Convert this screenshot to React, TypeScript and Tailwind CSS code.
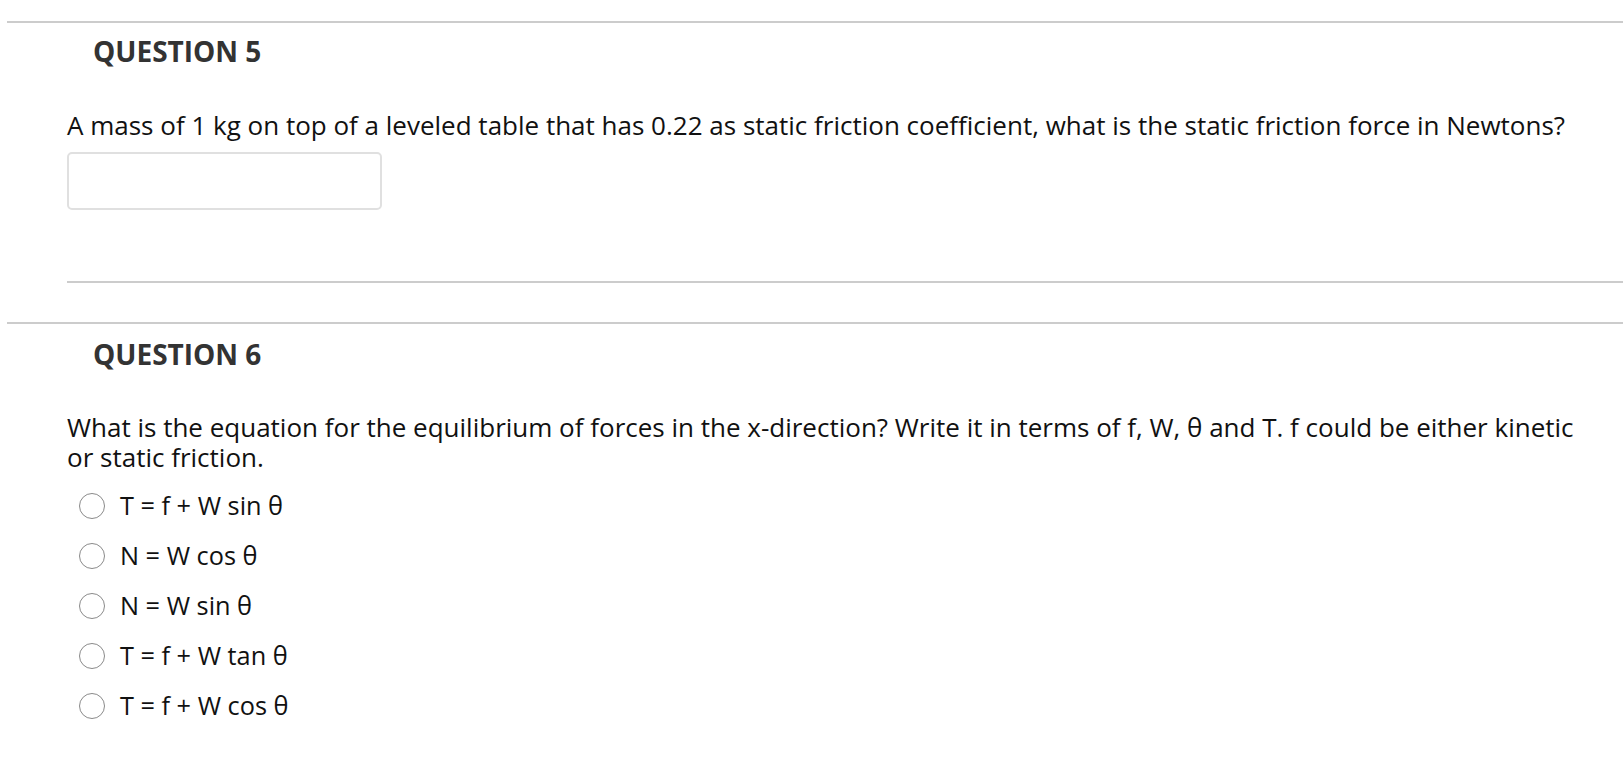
import React from "react";

const options = [
  "T = f + W sin θ",
  "N = W cos θ",
  "N = W sin θ",
  "T = f + W tan θ",
  "T = f + W cos θ",
];

export default function App() {
  return (
    <div
      className="min-h-[762px] w-full bg-white pt-[21px] pl-[7px] text-[#111]"
      style={{ fontFamily: '"Open Sans", "Noto Sans", sans-serif' }}
    >
      {/* Question 5 */}
      <section className="border-t-2 border-[#cccccc]">
        <h2 className="pl-[86px] pt-[9px] text-[28px] font-bold leading-[38px] text-[#333333]">
          QUESTION 5
        </h2>
        <div className="ml-[60px] border-b-2 border-[#cccccc] pb-[71px] pt-[40px]">
          <p className="pr-[33px] text-[26px] leading-[30.6px]">
            A mass of 1 kg on top of a leveled table that has 0.22 as static friction coefficient, what is the static friction force in Newtons?
          </p>
          <input
            type="text"
            className="mt-[11px] block h-[58px] w-[315px] rounded-[5px] border-2 border-[#e0e0e0] bg-white outline-none"
          />
        </div>
      </section>

      {/* Question 6 */}
      <section className="mt-[39px] border-t-2 border-[#cccccc]">
        <h2 className="pl-[86px] pt-[11px] text-[28px] font-bold leading-[38px] text-[#333333]">
          QUESTION 6
        </h2>
        <div className="ml-[60px] pt-[39px]">
          <p className="pr-[33px] text-[26px] leading-[30.6px]">
            What is the equation for the equilibrium of forces in the x-direction? Write it in terms of f, W, θ and T. f could be either kinetic or static friction.
          </p>
          <ul className="mt-[8px] flex flex-col">
            {options.map((o) => (
              <li key={o} className="flex h-[50px] items-center">
                <span className="ml-[12px] block h-[26px] w-[26px] rounded-full border-[1.5px] border-[#8a8a8a] bg-white" />
                <span className="ml-[15px] text-[25.3px] leading-[30.6px]">{o}</span>
              </li>
            ))}
          </ul>
        </div>
      </section>
    </div>
  );
}
